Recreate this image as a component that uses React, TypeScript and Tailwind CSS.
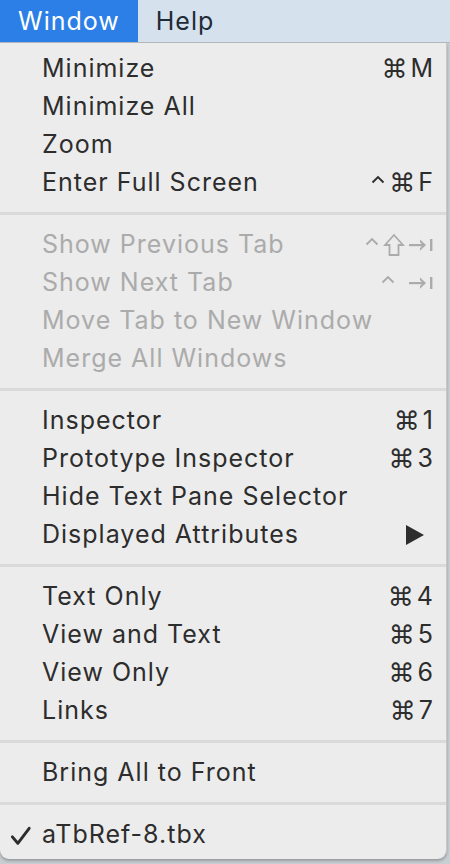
import type { ReactNode } from 'react';

type Item = {
  label: string;
  shortcut?: ReactNode;
  disabled?: boolean;
  submenu?: boolean;
  checked?: boolean;
};

const Ctrl = ({ className = '' }: { className?: string }) => (
  <svg viewBox="0 0 16 16" className={`h-[16px] w-[16px] ${className}`} fill="none" stroke="currentColor" strokeWidth="1.9">
    <path d="M2.5 10.5 L8 5 L13.5 10.5" />
  </svg>
);

const Shift = () => (
  <svg viewBox="0 0 22 24" className="h-[24px] w-[22px]" fill="none" stroke="currentColor" strokeWidth="1.8" strokeLinejoin="miter">
    <path d="M11 2 L20 12 L15.5 12 L15.5 22 L6.5 22 L6.5 12 L2 12 Z" />
  </svg>
);

const TabArrow = () => (
  <svg viewBox="0 0 26 16" className="h-[16px] w-[26px]" fill="currentColor" stroke="none">
    <rect x="1" y="7" width="16" height="2.2" />
    <path d="M12 2.5 L18 8.1 L12 13.7 L12 11 L15 8.1 L12 5.2 Z" />
    <rect x="22" y="2" width="2.4" height="12" />
  </svg>
);

const Cmd = ({ k }: { k: string }) => (
  <span className="flex items-center gap-[3px]">
    <span className="font-['DejaVu_Sans',sans-serif] text-[26px] tracking-normal">⌘</span>
    <span>{k}</span>
  </span>
);

const groups: Item[][] = [
  [
    { label: 'Minimize', shortcut: <Cmd k="M" /> },
    { label: 'Minimize All' },
    { label: 'Zoom' },
    {
      label: 'Enter Full Screen',
      shortcut: (
        <span className="flex items-center gap-[3px]">
          <Ctrl className="mt-[-6px]" />
          <Cmd k="F" />
        </span>
      ),
    },
  ],
  [
    {
      label: 'Show Previous Tab',
      disabled: true,
      shortcut: (
        <span className="flex items-center gap-[3px]">
          <Ctrl className="mt-[-6px]" />
          <Shift />
          <TabArrow />
        </span>
      ),
    },
    {
      label: 'Show Next Tab',
      disabled: true,
      shortcut: (
        <span className="flex items-center gap-[12px]">
          <Ctrl className="mt-[-6px]" />
          <TabArrow />
        </span>
      ),
    },
    { label: 'Move Tab to New Window', disabled: true },
    { label: 'Merge All Windows', disabled: true },
  ],
  [
    { label: 'Inspector', shortcut: <Cmd k="1" /> },
    { label: 'Prototype Inspector', shortcut: <Cmd k="3" /> },
    { label: 'Hide Text Pane Selector' },
    { label: 'Displayed Attributes', submenu: true },
  ],
  [
    { label: 'Text Only', shortcut: <Cmd k="4" /> },
    { label: 'View and Text', shortcut: <Cmd k="5" /> },
    { label: 'View Only', shortcut: <Cmd k="6" /> },
    { label: 'Links', shortcut: <Cmd k="7" /> },
  ],
  [{ label: 'Bring All to Front' }],
  [{ label: 'aTbRef-8.tbx', checked: true }],
];

function MenuRow({ item }: { item: Item }) {
  return (
    <div
      className={`flex h-[38px] items-center pl-[42px] pr-[12px] pt-[2px] relative ${
        item.disabled ? 'text-[#ababab]' : 'text-[#2d2d2d]'
      }`}
    >
      {item.checked && (
        <svg viewBox="0 0 24 22" className="absolute left-[10px] top-[11px] h-[20px] w-[22px]" fill="none" stroke="#2d2d2d" strokeWidth="3.2" strokeLinecap="round" strokeLinejoin="round">
          <path d="M2.5 12 L8.5 19 L21 2.5" />
        </svg>
      )}
      <span className="flex-1">{item.label}</span>
      {item.shortcut && <span className="flex items-center">{item.shortcut}</span>}
      {item.submenu && (
        <svg viewBox="0 0 18 20" className="mr-[10px] h-[20px] w-[18px]" fill="#2d2d2d">
          <path d="M0 0 L18 10 L0 20 Z" />
        </svg>
      )}
    </div>
  );
}

export default function App() {
  return (
    <div className="h-[864px] w-[450px] overflow-hidden bg-[#c9ced3] font-['Inter',sans-serif] text-[25px] tracking-[1px]">
      {/* menu bar */}
      <div className="flex h-[43px] border-b border-[#b4b8bc] bg-[#d5e1ec] text-[25px] leading-none">
        <div className="flex items-center bg-[#2b7fe6] pl-[18px] pr-[18px] text-white">Window</div>
        <div className="flex items-center px-[18px] text-[#1f2b36]">Help</div>
      </div>

      {/* dropdown */}
      <div className="mr-[3px] rounded-b-[9px] border-r border-[#c8c8c8] bg-[#ececec] py-[6px] shadow-[0_2px_3px_rgba(0,0,0,0.25)]">
        {groups.map((g, gi) => (
          <div key={gi}>
            {gi > 0 && (
              <div className="flex h-[24px] items-center">
                <div className="h-[3px] w-full bg-[#dadada]" />
              </div>
            )}
            {g.map((item) => (
              <MenuRow key={item.label} item={item} />
            ))}
          </div>
        ))}
      </div>
    </div>
  );
}
